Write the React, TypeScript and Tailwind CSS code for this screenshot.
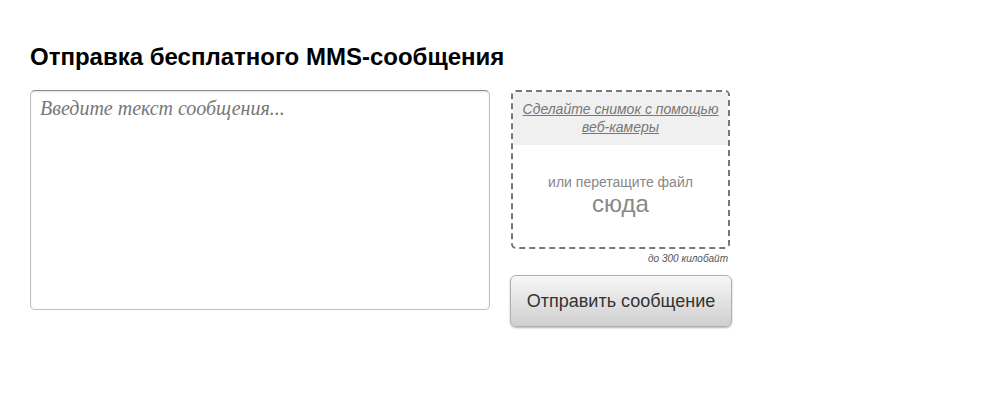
import React from 'react';

export default function App() {
  return (
    <div className="min-h-screen bg-white font-['Liberation_Sans',Arial,sans-serif]">
      <div className="pl-[30px] pt-[42px]">
        <h1 className="text-[24px] leading-[30px] font-bold text-black">
          Отправка бесплатного MMS-сообщения
        </h1>

        <div className="mt-[18px] flex items-start gap-[21px]">
          {/* Message textarea */}
          <textarea
            placeholder="Введите текст сообщения..."
            className="w-[460px] h-[220px] resize-none rounded-[5px] border border-[#c0c0c0] border-t-[#8c8c8c] bg-white px-[9px] py-[4px] font-['Liberation_Serif',Georgia,serif] text-[20px] italic leading-[26px] text-[#555] placeholder:text-[#777] shadow-[inset_0_1px_2px_rgba(0,0,0,0.12)] outline-none"
          />

          {/* Upload column */}
          <div className="flex w-[219px] flex-col">
            <div className="h-[159px] rounded-[5px] border-2 border-dashed border-[#777] overflow-hidden">
              <div className="bg-[#f0f0f0] h-[53px] pt-[8px] text-center text-[14px] italic leading-[18px] text-[#777]">
                <a href="#" className="underline">
                  Сделайте снимок с помощью
                  <br />
                  веб-камеры
                </a>
              </div>
              <div className="pt-[28px] text-center text-[#888]">
                <div className="text-[14px] leading-[18px]">или перетащите файл</div>
                <div className="text-[24px] leading-[26px]">сюда</div>
              </div>
            </div>
            <div className="mt-[4px] pr-[2px] text-right text-[10px] italic leading-[12px] text-[#555]">
              до 300 килобайт
            </div>
            <button className="-ml-[1px] mt-[10px] h-[52px] w-[222px] rounded-[6px] border border-[#b0b0b0] bg-gradient-to-b from-[#f7f7f7] to-[#cfcfcf] text-[18px] text-[#333] shadow-[0_1px_2px_rgba(0,0,0,0.3)]">
              Отправить сообщение
            </button>
          </div>
        </div>
      </div>
    </div>
  );
}
